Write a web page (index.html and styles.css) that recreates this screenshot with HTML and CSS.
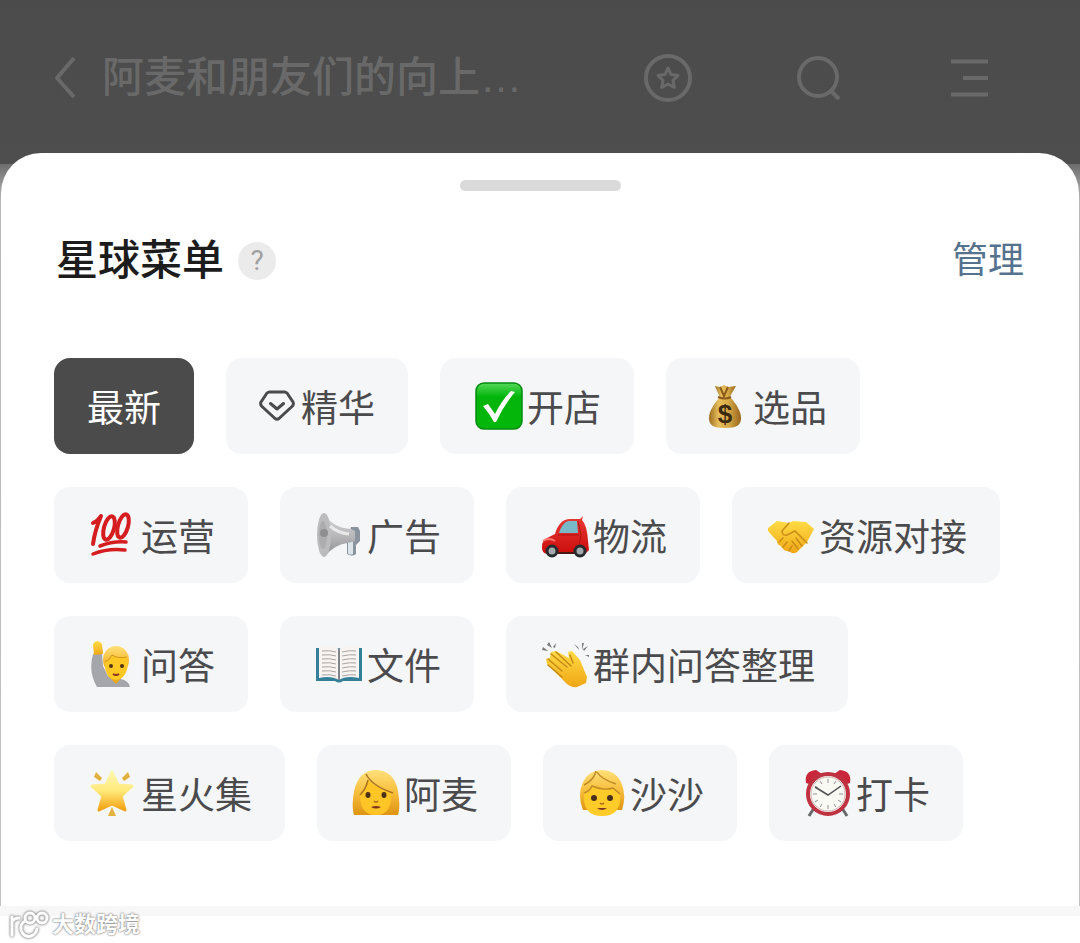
FILE: index.html
```
<!DOCTYPE html>
<html lang="zh-CN">
<head>
<meta charset="utf-8">
<meta name="viewport" content="width=device-width, initial-scale=1">
<title>星球菜单</title>
<link rel="stylesheet" href="styles.css">
</head>
<body>
<svg class="defs" aria-hidden="true">
  <defs>
    <linearGradient id="green" x1="0" y1="0" x2="0" y2="1"><stop offset="0" stop-color="#55d957"/><stop offset=".22" stop-color="#18bf20"/><stop offset=".3" stop-color="#03b50b"/><stop offset="1" stop-color="#05b70a"/></linearGradient>
    <linearGradient id="gold" x1="0" y1="0" x2="1" y2="0"><stop offset="0" stop-color="#9c6c20"/><stop offset=".3" stop-color="#e6bf5d"/><stop offset=".6" stop-color="#d9ab47"/><stop offset="1" stop-color="#97651c"/></linearGradient>
    <linearGradient id="skin" x1="0" y1="0" x2="0" y2="1"><stop offset="0" stop-color="#ffdc45"/><stop offset="1" stop-color="#f0a615"/></linearGradient>
    <linearGradient id="hair" x1="0" y1="0" x2="0" y2="1"><stop offset="0" stop-color="#ffe07a"/><stop offset=".5" stop-color="#f7be3c"/><stop offset="1" stop-color="#dd9412"/></linearGradient>
    <linearGradient id="silver" x1="0" y1="0" x2="0" y2="1"><stop offset="0" stop-color="#d9d9da"/><stop offset=".5" stop-color="#b9b9bc"/><stop offset="1" stop-color="#8e8e92"/></linearGradient>
    <linearGradient id="red" x1="0" y1="0" x2="0" y2="1"><stop offset="0" stop-color="#e93a35"/><stop offset="1" stop-color="#cb0d0c"/></linearGradient>
    <linearGradient id="star" x1="0" y1="0" x2="0" y2="1"><stop offset="0" stop-color="#fff7ae"/><stop offset=".5" stop-color="#ffe979"/><stop offset="1" stop-color="#f5a012"/></linearGradient>
  </defs>
</svg>
<div class="page">
  <header class="topbar">
    <button class="icon-button back" type="button" aria-label="返回">
      <svg width="24" height="48" viewBox="0 0 24 48"><path d="M22 4 5 24 22 43"/></svg>
    </button>
    <h1 class="topbar-title">阿麦和朋友们的向上…</h1>
    <nav class="actions" aria-label="操作">
      <button class="icon-button" type="button" aria-label="收藏">
        <svg width="50" height="50" viewBox="0 0 50 50"><circle cx="25" cy="25" r="22"/><path d="m25 15 3 6.600 7 .9-5 5 1.300 7L25 31l-6.300 3.500 1.300-7-5-5 7-.9z" stroke-width="3"/></svg>
      </button>
      <button class="icon-button" type="button" aria-label="搜索">
        <svg width="50" height="50" viewBox="0 0 50 50"><circle cx="24" cy="24" r="19"/><path d="m36 37 9 9"/></svg>
      </button>
      <button class="icon-button" type="button" aria-label="菜单">
        <svg width="50" height="50" viewBox="0 0 50 50"><path d="M6 8.500h37M18 25h25M6 41.500h37"/></svg>
      </button>
    </nav>
  </header>

  <main class="sheet">
    <div class="handle"></div>
    <div class="sheet-head">
      <h2 class="sheet-title">星球菜单</h2>
      <button class="help" type="button" aria-label="帮助">?</button>
      <a class="manage" href="#">管理</a>
    </div>

    <div class="menu">
      <div class="row">
        <button class="chip active" type="button">最新</button>
        <button class="chip" type="button">
          <svg class="gem" width="36" height="36" viewBox="0 0 36 36" aria-hidden="true"><path d="M10 4h16l2 1 6 9q1 2-.5 4L20 30.500q-2 1.500-4 0L2.500 18Q1 16 2 14l6-9zM11.500 15.500 18 21l6.500-5.500"/></svg>精华</button>
        <button class="chip" type="button">
          <svg class="emoji" viewBox="0 0 48 48" aria-hidden="true"><rect x="1" y="1" width="46" height="46" rx="8" fill="url(#green)" stroke="#078a10" stroke-width="1.500"/><path d="m8 24 5-2 7 10Q27 18 36 9l4 1Q29 23 21 40h-2Q14 31 8 24z" fill="#fff"/></svg>开店</button>
        <button class="chip" type="button">
          <svg class="emoji" viewBox="0 0 48 48" aria-hidden="true"><path d="m14 4 5 1 4-2 4 2 8-1-8 14h-7z" fill="url(#gold)"/><path d="M18 16h12c5 6 10 13 10 20 0 7-4 10-16 10S8 43 8 36c0-7 5-14 10-20z" fill="url(#gold)"/><path d="M17 15q7 3 13 0M19 5l4 9 4-9" fill="none" stroke="#8d5c1b" stroke-width="2"/><text x="24" y="41" text-anchor="middle" class="dollar">$</text></svg>选品</button>
      </div>
      <div class="row">
        <button class="chip" type="button">
          <svg class="emoji" viewBox="0 0 48 48" aria-hidden="true"><g fill="none" stroke="#d51c1f" stroke-linecap="round" stroke-linejoin="round"><path d="M4 12q5-2 8-7Q6 19 4 33" stroke-width="4"/><ellipse cx="20" cy="17" rx="5" ry="12" transform="rotate(16 20 17)" stroke-width="4"/><ellipse cx="34" cy="15" rx="5" ry="12" transform="rotate(16 34 15)" stroke-width="4"/><path d="M11 35q13-5 26-4M4 43q15-6 32-4" stroke-width="3.500"/></g></svg>运营</button>
        <button class="chip" type="button">
          <svg class="emoji" viewBox="0 0 48 48" aria-hidden="true"><path d="M36 16h7l2 4v10l-4 4v9q-4 3-9 0V32h3V20z" fill="#8a949e"/><path d="M33 31v12q3 1 5 0V30z" fill="#dde4e9"/><path d="M8 2Q18 17 36 18l4 2v10l-7 2Q20 33 9 46z" fill="url(#silver)"/><ellipse cx="9" cy="24" rx="7" ry="22" fill="#bcbcbe"/><ellipse cx="8" cy="24" rx="4" ry="14" fill="#adadaf"/><circle cx="9" cy="22" r="4" fill="#8f8f91"/><path d="M15 15q8 7 19 8" fill="none" stroke="#e8e8e8" stroke-width="3"/></svg>广告</button>
        <button class="chip" type="button">
          <svg class="emoji" viewBox="0 0 48 48" aria-hidden="true"><path d="M14 23q4-14 14-15h11l3-3-1 4q5 5 6 21l1 9-4 4H6q-5-1-5-6-1-8 7-11z" fill="url(#red)"/><path d="M18 22q3-10 9-12h9l1 12z" fill="#79b8c7"/><path d="M37 10l3 14-3 16M17 24h21" fill="none" stroke="#b01313"/><path d="M2 30q6-4 12 0" fill="none" stroke="#ff746b" stroke-width="2"/><g fill="#a4aaad" stroke="#262b2d" stroke-width="3"><circle cx="11" cy="40" r="5"/><circle cx="39" cy="40" r="5"/></g><path d="M17 42h16" stroke="#4a1817" stroke-width="2"/></svg>物流</button>
        <button class="chip" type="button">
          <svg class="emoji" viewBox="0 0 48 48" aria-hidden="true"><path d="m1 17 9-7 12 2 4-2 13 1 8 7-7 13-10 10q-4 3-8-1-5 1-8-5-4-1-4-5L1 20z" fill="url(#skin)"/><path d="M22 12 15 20q0 5 5 4l8-4 12 12M12 31l4-4M16 36l4-5M22 40l3-5M29 27l6 8M25 30l6 8" fill="none" stroke="#c98d16" stroke-width="1.500" stroke-linecap="round"/></svg>资源对接</button>
      </div>
      <div class="row">
        <button class="chip" type="button">
          <svg class="emoji" viewBox="0 0 48 48" aria-hidden="true"><path d="M4 14q-5 18 4 33h33q-1-6-9-8l-13-3-5-10-1-12z" fill="#a4a6ab"/><path d="M4 4q4-6 9 0l1 10-9 1z" fill="url(#skin)"/><ellipse cx="27" cy="20" rx="13" ry="14" fill="url(#hair)"/><path d="M19 36h15l-7 8z" fill="#e8aa18"/><path d="M16 22q5-2 7-7 6 4 15 2 3 12-4 20-7 6-14 0-5-6-4-15z" fill="#ffc824"/><path d="M16 22q5-2 7-7 6 4 15 2" fill="none" stroke="#cf921b"/><g fill="#523414"><circle cx="22" cy="26" r="2"/><circle cx="33" cy="26" r="2"/></g><path d="M24 34q3 2 6 0" fill="none" stroke="#8d371a" stroke-width="2"/></svg>问答</button>
        <button class="chip" type="button">
          <svg class="emoji" viewBox="0 0 48 48" aria-hidden="true"><path d="M1 8h46v33H28q-4 3-8 0H1z" fill="#367f99"/><path d="M4 7q14-3 20 2 6-5 20-2v31q-13-3-20 2-8-5-20-2z" fill="#f7f4f2"/><path d="M24 9v31" stroke="#80858b" stroke-width="2"/><path d="M7 11q8-1 14 1M7 15q8-1 14 1M7 19q8-1 14 1M7 23q8-1 14 1M7 27q8-1 14 1M7 31q8-1 14 1M7 35q8-1 14 1M27 12q8-2 14-1M27 16q8-2 14-1M27 20q8-2 14-1M27 24q8-2 14-1M27 28q8-2 14-1M27 32q8-2 14-1M27 36q8-2 14-1" fill="none" stroke="#aaa3a3"/></svg>文件</button>
        <button class="chip" type="button">
          <svg class="emoji" viewBox="0 0 48 48" aria-hidden="true"><path d="m5 19 4-1 1-6 5-1 13 7-1-6 4-1 8 9 7 17-1 6-9 4q-4 1-10-3L6 24z" fill="url(#skin)"/><path d="m7 19 14 12M10 14l16 13M15 12l15 14M29 15l3 8M7 25l14 12" fill="none" stroke="#c48a17" stroke-width="1.500" stroke-linecap="round"/><path d="m2 7 5 4-6-1zm6-5 3 6-5-3zm7 1-1 5-2-1zm18 1 4 3 1 3zm8-1 2 0-2 7zm6 3-4 5-1-2zm-3 9 5 0-1 2z" fill="#777b77"/></svg>群内问答整理</button>
      </div>
      <div class="row">
        <button class="chip" type="button">
          <svg class="emoji" viewBox="0 0 48 48" aria-hidden="true"><path d="m7 3 6 6-2 3-6-4zm32 0-6 6 2 3 6-4zM23 38l4 9h-8z" fill="#e3b13d"/><path d="m23 3 6 13 14 1-11 10 4 14-13-6-13 6 4-14L3 17l14-1z" fill="url(#star)" stroke="url(#star)" stroke-width="3" stroke-linejoin="round"/></svg>星火集</button>
        <button class="chip" type="button">
          <svg class="emoji" viewBox="0 0 48 48" aria-hidden="true"><path d="M2 46Q0 40 1 30C3 10 11 1 24 1s22 9 23 29q1 10-1 16z" fill="url(#hair)"/><path d="M8 26q6-6 8-15 8 8 23 13 1 22-15 22T8 26z" fill="#ffc526"/><path d="M14 5q6 12 27 19M16 11q-2 9-8 15" fill="none" stroke="#ab7420" stroke-width="1.500"/><g fill="#4a3117"><ellipse cx="16" cy="26" rx="2.500" ry="3"/><ellipse cx="32" cy="26" rx="2.500" ry="3"/></g><path d="M22 32q2 2 4 0" fill="none" stroke="#a96c16" stroke-width="1.500"/><path d="M19 38q5-2 10 0-5 3-10 0z" fill="#7b351d"/></svg>阿麦</button>
        <button class="chip" type="button">
          <svg class="emoji" viewBox="0 0 48 48" aria-hidden="true"><path d="M5 41Q-1 26 5 13 11 1 24 1t19 12q6 13 1 28z" fill="url(#hair)"/><path d="M6 24q5-1 8-7 13 5 21 2l7 6q2 22-18 22T6 24z" fill="#ffcb29"/><path d="M18 2q-2 9-12 14M19 3q4 7 19 12M6 24q6-2 8-7 13 5 21 2l7 6" fill="none" stroke="#c18b28" stroke-width="1.500"/><g fill="#4a3117"><ellipse cx="16" cy="29" rx="3" ry="3"/><ellipse cx="32" cy="29" rx="3" ry="3"/></g><path d="M22 34q2 2 4 0" fill="none" stroke="#a96c16" stroke-width="1.500"/><path d="M19 39h10q-5 4-10 0z" fill="#7b351d"/></svg>沙沙</button>
        <button class="chip" type="button">
          <svg class="emoji" viewBox="0 0 48 48" aria-hidden="true"><path d="m10 39-5 8M38 39l5 8" stroke="#666b6c" stroke-width="3"/><path d="M2 14Q0 2 12 1l6 4L5 15zM46 14Q48 2 36 1l-6 4 13 10z" fill="#c9263a"/><circle cx="24" cy="25" r="20" fill="#fafaf5" stroke="#bf3241" stroke-width="4"/><circle cx="24" cy="25" r="17" fill="none" stroke="#cbb4b4"/><path d="M24 10v4M24 36v4M9 25h4M35 25h4M16 12l2 3M32 12l-2 3M11 17l3 2M37 17l-3 2M11 33l3-2M37 33l-3-2M16 38l2-3M32 38l-2-3" stroke="#909293"/><path d="m11 18 13 8 13-9" fill="none" stroke="#535455" stroke-width="1.500"/></svg>打卡</button>
      </div>
    </div>
  </main>

  <footer class="footer">
    <svg class="brand-mark" width="42" height="32" viewBox="0 0 42 32" aria-hidden="true"><g fill="none" stroke-linecap="round"><path d="M4 8v18M4 13q2-4 7-4M17 12q-5 3-4 9 3 8 10 6 5-2 6-7"/><circle cx="22" cy="9" r="5"/><circle cx="34" cy="9" r="5"/></g></svg>
    <span class="brand-name">大数跨境</span>
  </footer>
</div>
</body>
</html>
```
FILE: styles.css
```
* {
  box-sizing: border-box;
}

body {
  margin: 0;
  font-family: "Liberation Sans", "Noto Sans CJK SC", sans-serif;
  color: #4b4b4d;
  background: #fff;
}

button {
  padding: 0;
  border: 0;
  background: none;
  font: inherit;
  color: inherit;
  cursor: pointer;
}

svg {
  display: block;
  flex: none;
}

.defs {
  position: absolute;
  width: 0;
  height: 0;
}

.page {
  display: flex;
  flex-direction: column;
  min-height: 100vh;
  background: linear-gradient(#4b4b4b 0, #4e4e4e 164px, #6c6c6c 164px, #b8b8b8 200px, #c4c4c4 100%);
}

.topbar {
  display: flex;
  align-items: center;
  height: 153px;
  padding: 3px 85px 0 52px;
  color: #696969;
}

.icon-button svg {
  fill: none;
  stroke: currentColor;
  stroke-width: 4;
  stroke-linejoin: round;
}

.topbar-title {
  margin: 0 0 0 26px;
  font-size: 42px;
  line-height: 64px;
  font-weight: 500;
  white-space: nowrap;
}

.actions {
  display: flex;
  gap: 101px;
  margin-left: auto;
}

.sheet {
  margin: 0 1px;
  padding: 27px 53px 65px;
  border-radius: 40px 40px 0 0;
  background: #fff;
}

.handle {
  width: 161px;
  height: 11px;
  margin: 0 auto;
  border-radius: 6px;
  background: #dadada;
}

.sheet-head {
  display: flex;
  align-items: center;
  height: 64px;
  margin: 38px 2px 65px;
}

.sheet-title {
  margin: 0;
  font-size: 42px;
  line-height: 64px;
  font-weight: 500;
  color: #1c1c1c;
}

.help {
  width: 38px;
  height: 38px;
  margin-left: 14px;
  border-radius: 50%;
  background: #ebebeb;
  color: #a0a0a0;
  font-family: Roboto, sans-serif;
  font-size: 28px;
  line-height: 38px;
}

.manage {
  margin-left: auto;
  font-size: 36px;
  line-height: 64px;
  color: #55728f;
  text-decoration: none;
}

.menu {
  display: grid;
  gap: 33px;
}

.row {
  display: flex;
  flex-wrap: wrap;
  gap: 32px;
}

.chip {
  display: flex;
  align-items: center;
  height: 96px;
  padding: 0 33px;
  border-radius: 16px;
  background: #f5f6f8;
  font-family: "Noto Sans CJK SC", sans-serif;
  font-size: 37px;
  line-height: 56px;
  white-space: nowrap;
}

.active {
  background: #4b4b4b;
  color: #fff;
}

.gem {
  margin-right: 6px;
  fill: none;
  stroke: currentColor;
  stroke-width: 3;
  stroke-linecap: round;
  stroke-linejoin: round;
}

.emoji {
  width: 48px;
  height: 48px;
  margin: 0 4px 0 2px;
}

.dollar {
  font-family: "Liberation Sans", sans-serif;
  font-size: 26px;
  font-weight: 700;
  fill: #3c2b11;
}

.footer {
  display: flex;
  flex: 1;
  align-items: center;
  padding: 0 8px;
  background: linear-gradient(#f7f7f7 10px, #fff 10px);
}

.brand-mark {
  stroke: #fff;
  stroke-width: 3;
  filter: drop-shadow(0 0 1px #888) drop-shadow(0 0 1px #aaa);
}

.brand-name {
  margin-left: 2px;
  font-size: 22px;
  line-height: 28px;
  font-weight: 700;
  color: #fff;
  text-shadow: 0 0 2px #777, 0 0 2px #999;
}
```
